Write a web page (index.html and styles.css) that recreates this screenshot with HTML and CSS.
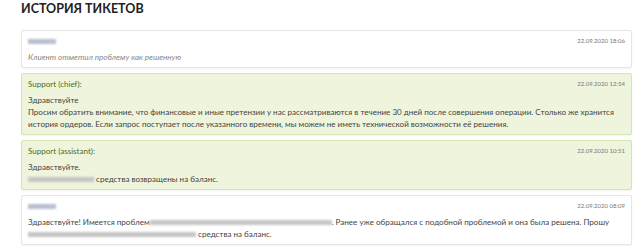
FILE: index.html
```html
<!DOCTYPE html>
<html lang="ru">
<head>
    <meta charset="UTF-8">
    <title>История тикетов</title>
    <link rel="stylesheet" href="styles.css">
</head>
<body>
    <h2 class="title">История тикетов</h2>

    <div class="history">
        <div class="msg">
            <div class="msg-head">
                <span class="hidden-name"></span>
                <span class="msg-date">22.09.2020 18:06</span>
            </div>
            <div class="msg-text note">Клиент отметил проблему как решенную</div>
        </div>

        <div class="msg support">
            <div class="msg-head">
                <span class="author">Support (chief):</span>
                <span class="msg-date">22.09.2020 12:54</span>
            </div>
            <div class="msg-text">
                Здравствуйте<br>
                Просим обратить внимание, что финансовые и иные претензии у нас рассматриваются в течение 30 дней после совершения операции. Столько же хранится история ордеров. Если запрос поступает после указанного времени, мы можем не иметь технической возможности её решения.
            </div>
        </div>

        <div class="msg support">
            <div class="msg-head">
                <span class="author">Support (assistant):</span>
                <span class="msg-date">22.09.2020 10:51</span>
            </div>
            <div class="msg-text">
                Здравствуйте.<br>
                <span class="blur" style="width: 66px"></span> средства возвращены на баланс.
            </div>
        </div>

        <div class="msg">
            <div class="msg-head">
                <span class="hidden-name"></span>
                <span class="msg-date">22.09.2020 08:09</span>
            </div>
            <div class="msg-text">
                Здравствуйте! Имеется проблем<span class="blur" style="width: 182px"></span>. Ранее уже обращался с подобной проблемой и она была решена. Прошу<br>
                <span class="blur" style="width: 168px"></span> средства на баланс.
            </div>
        </div>
    </div>
</body>
</html>
```

FILE: styles.css
```css
body {
    font-family: Lato, "Open Sans", Arial, sans-serif;
    background-color: #fff;
    color: #444;
    margin: 0;
    padding: 0 8px 0 21px;
}

.title {
    font-size: 12.5px;
    font-weight: bold;
    text-transform: uppercase;
    color: #222;
    margin: 0;
    line-height: 18px;
    margin-bottom: 12px;
}

.msg {
    border: 1px solid #e6e6e6;
    border-radius: 2px;
    box-shadow: 0 1px 2px rgba(0, 0, 0, 0.05);
    padding: 4px 6px 4px 6px;
    margin-bottom: 5px;
    font-size: 8.05px;
    line-height: 12px;
}

.msg.support {
    background: #eef5dc;
    border-color: #d3e5b6;
}

.msg-head {
    display: flex;
    justify-content: space-between;
    align-items: center;
    height: 12px;
    margin-bottom: 4px;
}

.author {
    color: #4f6b1f;
}

.msg-date {
    font-size: 6px;
    color: #777;
}

.hidden-name {
    display: inline-block;
    width: 28px;
    height: 5px;
    background: #b8bfd0;
    filter: blur(1px);
}

.note {
    font-style: italic;
    color: #888;
}

.blur {
    display: inline-block;
    height: 5px;
    background: #c6c6c6;
    filter: blur(1px);
    vertical-align: middle;
}
```
